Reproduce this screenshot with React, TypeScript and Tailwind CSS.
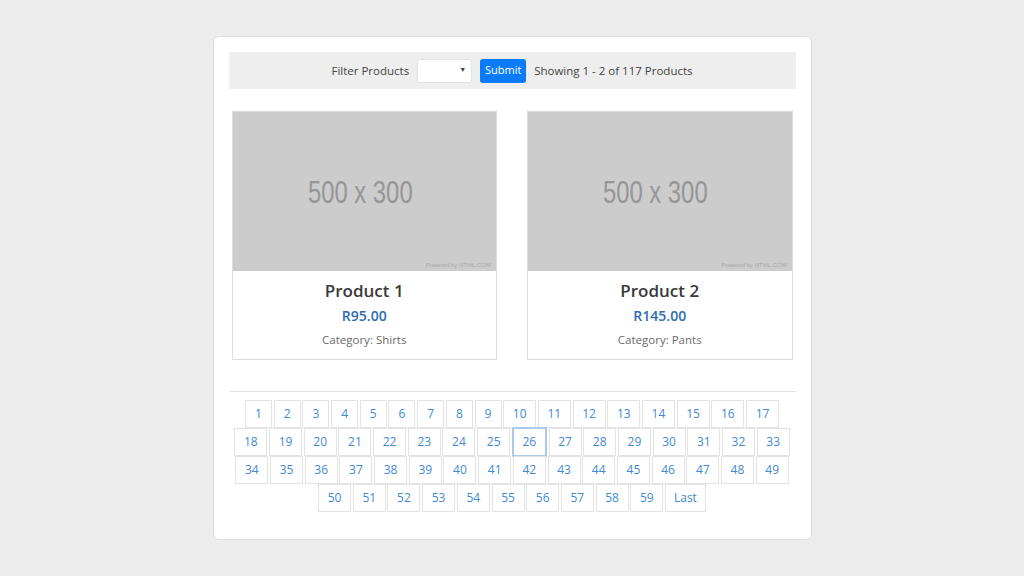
import React from "react";

const font = { fontFamily: '"Open Sans", "Noto Sans", sans-serif' };

function Placeholder() {
  return (
    <div className="relative h-[159px] bg-[#cccccc] flex items-center justify-center">
      <span
        className="text-[32px] text-[#969696] scale-x-[0.745] leading-none -ml-[8px]"
        style={{ fontFamily: '"Liberation Sans", Arial, sans-serif' }}
      >
        500 x 300
      </span>
      <span
        className="absolute right-[5px] bottom-[3px] text-[6px] text-[#a9a9a9] leading-none"
        style={{ fontFamily: '"Liberation Sans", Arial, sans-serif' }}
      >
        Powered by HTML.COM
      </span>
    </div>
  );
}

function ProductCard({ name, price, cat }: { name: string; price: string; cat: string }) {
  return (
    <div className="border border-[#dddddd] bg-white h-[249px]">
      <Placeholder />
      <div className="flex flex-col items-center pt-[9px]">
        <div className="text-[17px] font-semibold text-[#3a3a3a] leading-[22px]">{name}</div>
        <div className="text-[14px] font-semibold text-[#2d6bb5] leading-[18px] mt-[5px]">{price}</div>
        <div className="text-[11.5px] text-[#6b6b6b] leading-[16px] mt-[7px]">{cat}</div>
      </div>
    </div>
  );
}

function PageBtn({ label, active }: { label: string; active?: boolean }) {
  return (
    <div
      className={
        "h-[28px] flex items-center justify-center text-[12px] text-[#3f88d4] bg-white " +
        (label.length === 1 ? "w-[27px] " : label === "Last" ? "w-[41px] " : "w-[33px] ") +
        (active
          ? "border-2 border-[#a9c9ee] w-[35px] h-[30px] -my-[1px]"
          : "border border-[#e3e3e3]")
      }
    >
      {label}
    </div>
  );
}

const rows: string[][] = [
  Array.from({ length: 17 }, (_, i) => String(i + 1)),
  Array.from({ length: 16 }, (_, i) => String(i + 18)),
  Array.from({ length: 16 }, (_, i) => String(i + 34)),
  [...Array.from({ length: 10 }, (_, i) => String(i + 50)), "Last"],
];

export default function App() {
  return (
    <div className="min-h-[576px] w-full bg-[#ececec] flex justify-center pt-[36px]" style={font}>
      <div className="w-[599px] h-[504px] bg-white border border-[#dedede] rounded-[6px] p-[15px]">
        <div className="h-[37px] bg-[#eeeeee] flex items-center justify-center gap-[8px] text-[11.5px] text-[#444]">
          <span>Filter Products</span>
          <div className="w-[55px] h-[24px] bg-white border border-[#e2e2e2] rounded-[3px] flex items-center justify-end pr-[5px]">
            <span className="text-[7px] text-[#444]">▼</span>
          </div>
          <div className="w-[46px] h-[24px] bg-[#0a7bfa] rounded-[3px] text-white text-[11px] flex items-center justify-center">
            Submit
          </div>
          <span>Showing 1 - 2 of 117 Products</span>
        </div>

        <div className="grid grid-cols-2 gap-[30px] px-[3px] mt-[22px]">
          <ProductCard name="Product 1" price="R95.00" cat="Category: Shirts" />
          <ProductCard name="Product 2" price="R145.00" cat="Category: Pants" />
        </div>

        <div className="h-px bg-[#e4e4e4] mt-[31px]" />

        <div className="mt-[8px] flex flex-col items-center">
          {rows.map((r, i) => (
            <div key={i} className="flex gap-[1.7px]">
              {r.map((l) => (
                <PageBtn key={l} label={l} active={l === "26"} />
              ))}
            </div>
          ))}
        </div>
      </div>
    </div>
  );
}
